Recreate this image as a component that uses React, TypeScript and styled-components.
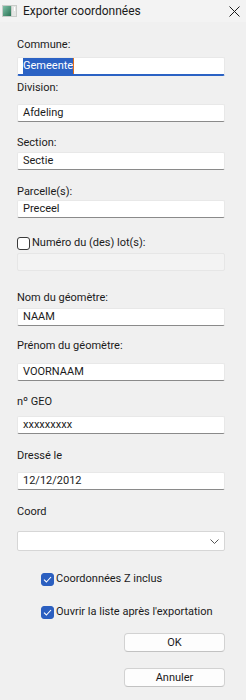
import React from "react";
import styled, { createGlobalStyle } from "styled-components";

const GlobalStyle = createGlobalStyle`
  html, body { margin: 0; padding: 0; background: #f0f0f0; }
  body { font-family: Roboto, "Noto Sans", "Liberation Sans", sans-serif; font-size: 11px; color: #1b1b1b; }
  * { box-sizing: border-box; }
`;

const Window = styled.div`
  width: 246px;
  height: 700px;
  background: #f0f0f0;
  display: flex;
  flex-direction: column;
  overflow: hidden;
`;

const TitleBar = styled.div`
  height: 22px;
  flex: none;
  background: #f3f3f3;
  display: flex;
  align-items: center;
  padding: 0 6px 0 2px;
`;

const TitleText = styled.div`
  flex: 1;
  margin-left: 6px;
  font-size: 12px;
  line-height: 16px;
  color: #1a1a1a;
`;

const Form = styled.div`
  display: flex;
  flex-direction: column;
  padding: 0 21px 0 17px;
`;

const Label = styled.div<{ $gap: number }>`
  margin-top: ${(p) => p.$gap}px;
  height: 16px;
  line-height: 16px;
  white-space: nowrap;
`;

const Input = styled.div<{ $gap: number; $focused?: boolean; $disabled?: boolean }>`
  margin-top: ${(p) => p.$gap}px;
  height: ${(p) => (p.$focused ? 19 : 18)}px;
  background: ${(p) => (p.$disabled ? "#f3f3f3" : "#ffffff")};
  border: 1px solid ${(p) => (p.$disabled ? "#e6e6e6" : "#e8e8e8")};
  border-bottom: ${(p) =>
    p.$focused ? "2px solid #2b62c4" : p.$disabled ? "1px solid #e6e6e6" : "1px solid #8a8a8a"};
  border-radius: 2px;
  padding-left: 5px;
  display: flex;
  align-items: center;
  line-height: 16px;
  white-space: nowrap;
`;

const Selected = styled.span`
  background: #2b62c4;
  color: #ffffff;
  border-right: 1px solid #e0701a;
`;

const Combo = styled.div<{ $gap: number }>`
  margin-top: ${(p) => p.$gap}px;
  height: 20px;
  background: #ffffff;
  border: 1px solid #d6d6d6;
  border-radius: 2px;
  display: flex;
  align-items: center;
  justify-content: flex-end;
  padding-right: 5px;
`;

const CheckRow = styled.label<{ $gap: number; $indent?: number }>`
  margin-top: ${(p) => p.$gap}px;
  margin-left: ${(p) => p.$indent ?? 0}px;
  height: 16px;
  display: flex;
  align-items: center;
  gap: 2px;
  line-height: 16px;
  white-space: nowrap;
`;

const Box = styled.span<{ $checked?: boolean }>`
  width: 13px;
  height: 13px;
  flex: none;
  border-radius: 3px;
  background: ${(p) => (p.$checked ? "#2b5fc0" : "#ffffff")};
  border: 1px solid ${(p) => (p.$checked ? "#2b5fc0" : "#3a3a3a")};
  display: flex;
  align-items: center;
  justify-content: center;
`;

const Button = styled.div<{ $gap: number }>`
  margin-top: ${(p) => p.$gap}px;
  align-self: flex-end;
  width: 101px;
  height: 19px;
  background: #fdfdfd;
  border: 1px solid #d2d2d2;
  border-bottom-color: #c2c2c2;
  border-radius: 4px;
  display: flex;
  align-items: center;
  justify-content: center;
  line-height: 16px;
`;

const Check = () => (
  <svg width="9" height="7" viewBox="0 0 9 7">
    <path d="M1 3.6 L3.4 6 L8 1" fill="none" stroke="#ffffff" strokeWidth="1.1" />
  </svg>
);

export default function App() {
  return (
    <>
      <GlobalStyle />
      <Window>
        <TitleBar>
          <svg width="15" height="12" viewBox="0 0 15 12">
            <defs>
              <linearGradient id="g" x1="0" y1="0" x2="1" y2="1">
                <stop offset="0" stopColor="#7fc0a8" />
                <stop offset="1" stopColor="#2a7454" />
              </linearGradient>
            </defs>
            <rect x="0" y="0" width="15" height="12" fill="#c9ccc9" />
            <rect x="1" y="1" width="8" height="10" fill="url(#g)" />
            <rect x="10" y="1" width="4" height="10" fill="#e4e6e4" />
            <rect x="12" y="2" width="1" height="4" fill="#ffffff" />
          </svg>
          <TitleText>Exporter coordonnées</TitleText>
          <svg width="11" height="11" viewBox="0 0 11 11">
            <path d="M0.5 0.5 L10.5 10.5 M10.5 0.5 L0.5 10.5" stroke="#1a1a1a" strokeWidth="1" />
          </svg>
        </TitleBar>
        <Form>
          <Label $gap={15}>Commune:</Label>
          <Input $gap={4} $focused>
            <Selected>Gemeente</Selected>
          </Input>
          <Label $gap={4}>Division:</Label>
          <Input $gap={8}>Afdeling</Input>
          <Label $gap={13}>Section:</Label>
          <Input $gap={1}>Sectie</Input>
          <Label $gap={14}>Parcelle(s):</Label>
          <Input $gap={0}>Preceel</Input>
          <CheckRow $gap={17}>
            <Box />
            Numéro du (des) lot(s):
          </CheckRow>
          <Input $gap={2} $disabled />
          <Label $gap={19}>Nom du géomètre:</Label>
          <Input $gap={2}>NAAM</Input>
          <Label $gap={12}>Prénom du géomètre:</Label>
          <Input $gap={9}>VOORNAAM</Input>
          <Label $gap={13}>nº GEO</Label>
          <Input $gap={6}>xxxxxxxxx</Input>
          <Label $gap={14}>Dressé le</Label>
          <Input $gap={8}>12/12/2012</Input>
          <Label $gap={14}>Coord</Label>
          <Combo $gap={11}>
            <svg width="9" height="5" viewBox="0 0 9 5">
              <path d="M0.5 0.5 L4.5 4.5 L8.5 0.5" fill="none" stroke="#555" strokeWidth="1" />
            </svg>
          </Combo>
          <CheckRow $gap={20} $indent={24}>
            <Box $checked>
              <Check />
            </Box>
            Coordonnées Z inclus
          </CheckRow>
          <CheckRow $gap={17} $indent={24}>
            <Box $checked>
              <Check />
            </Box>
            Ouvrir la liste après l'exportation
          </CheckRow>
          <Button $gap={13}>OK</Button>
          <Button $gap={16}>Annuler</Button>
        </Form>
      </Window>
    </>
  );
}
